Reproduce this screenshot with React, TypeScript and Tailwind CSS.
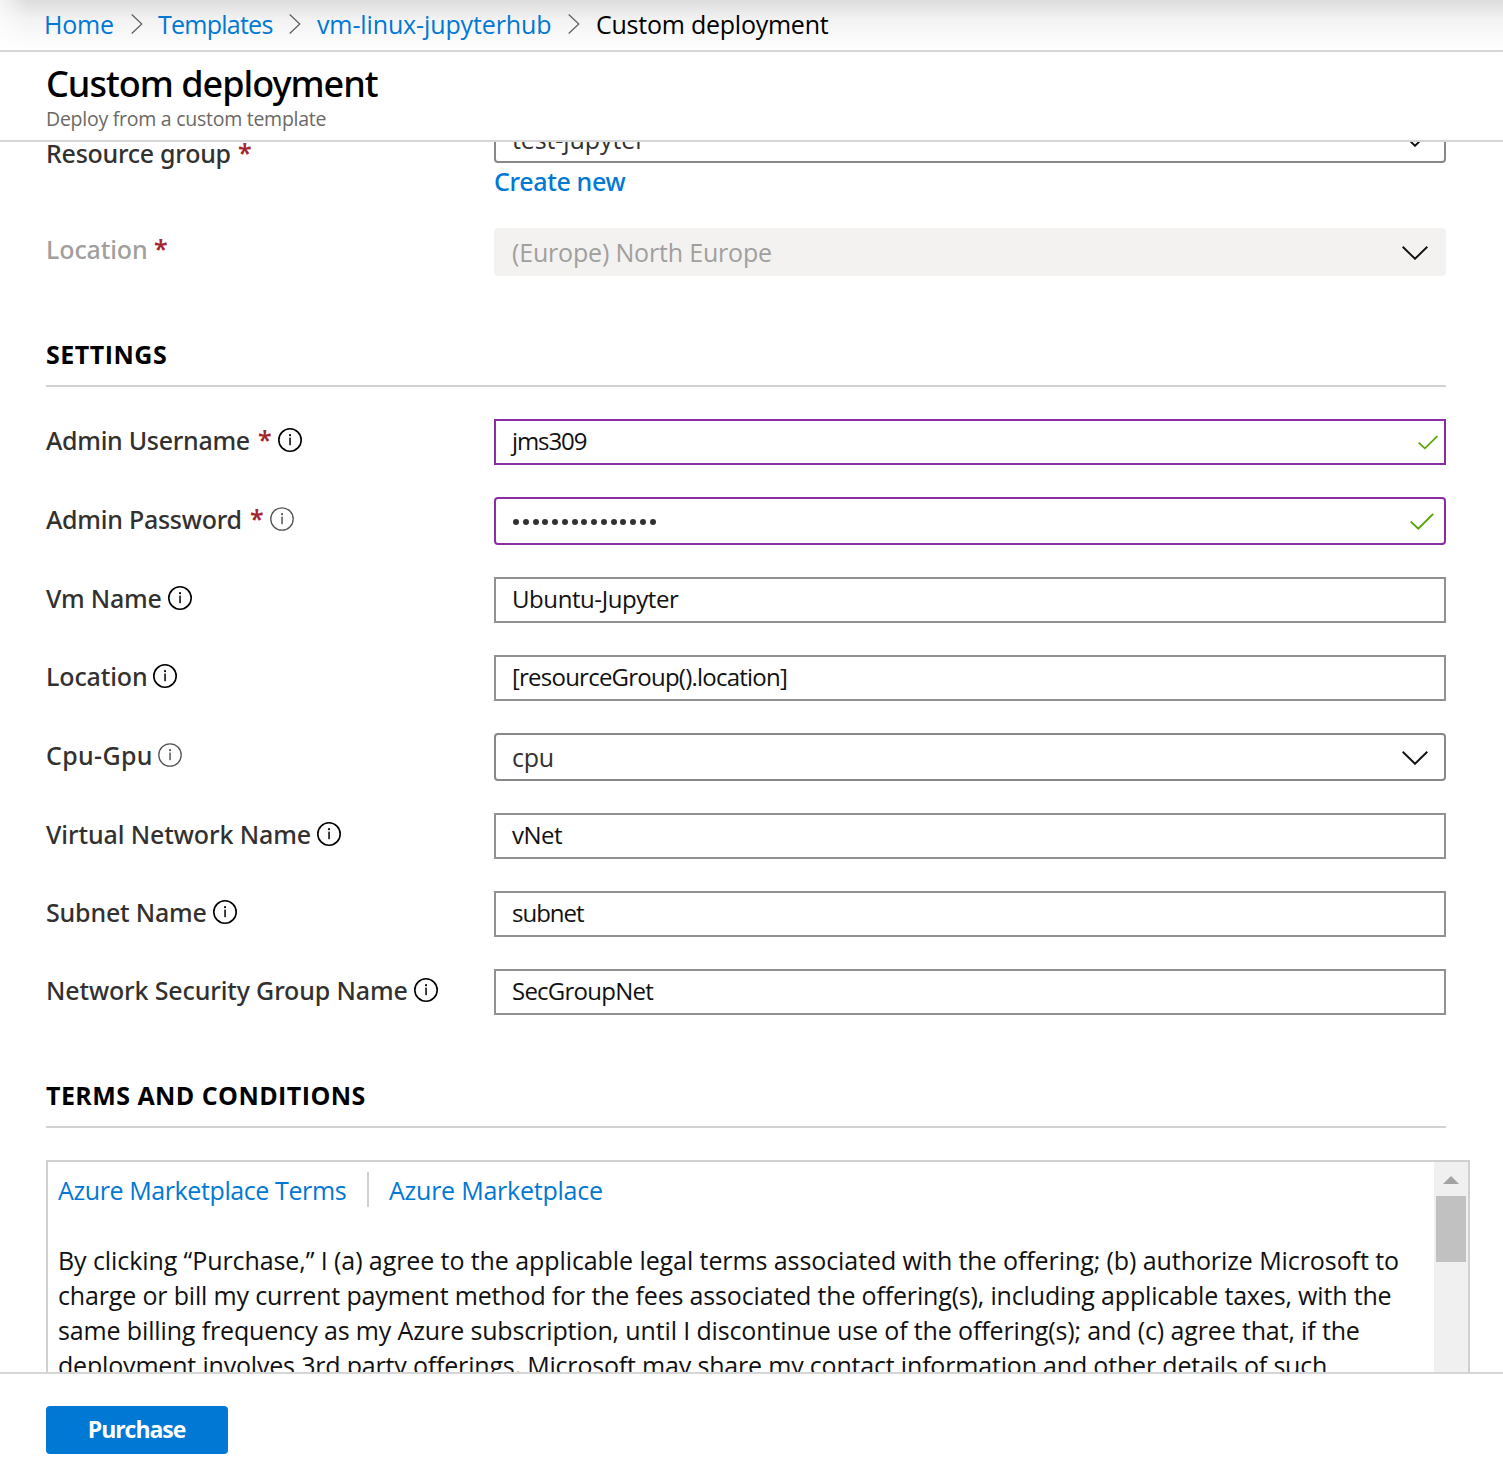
import React from "react";

const sans = "font-['Open_Sans','Noto_Sans',sans-serif]";
const medium = "font-['Noto_Sans','Open_Sans',sans-serif] font-medium";

function Separator() {
  return (
    <svg viewBox="0 0 12 20" className="mt-px mr-4 h-5 w-3 shrink-0" fill="none" stroke="#605e5c" strokeWidth="1.2">
      <path d="M0.7 0.5 L10.8 10 L0.7 19.5" />
    </svg>
  );
}

function Info({ muted }: { muted?: boolean }) {
  const color = muted ? "#555555" : "#000000";
  return (
    <svg viewBox="0 0 24 24" className="mt-px h-6 w-6 shrink-0" fill="none">
      <circle cx="12" cy="12" r="11.2" stroke={color} strokeWidth={muted ? 1.3 : 1.6} />
      <rect x="11.3" y="9.6" width="1.5" height="7.6" fill={color} />
      <rect x="11.1" y="6.2" width="1.9" height="1.9" fill={color} />
    </svg>
  );
}

function Chevron() {
  return (
    <svg viewBox="0 0 26 14" className="mt-px mr-4 h-[14px] w-[26px] shrink-0" fill="none" stroke="#111" strokeWidth="1.9">
      <path d="M0.7 0.8 L13 12.8 L25.3 0.8" />
    </svg>
  );
}

function Check({ className }: { className: string }) {
  return (
    <svg viewBox="0 0 24 17" className={`shrink-0 ${className}`} fill="none" stroke="#57a300" strokeWidth="1.9">
      <path d="M0.8 8.6 L8.3 15.6 L23.2 0.8" />
    </svg>
  );
}

function Star() {
  return <span className="h-[34px] w-5 shrink-0 text-[25px] leading-[32px] font-semibold text-[#a4262c]">*</span>;
}

type LabelProps = { text: string; className: string; required?: boolean; info?: "dark" | "muted"; disabled?: boolean };

function Label({ text, className, required, info, disabled }: LabelProps) {
  return (
    <div
      className={`flex w-[448px] shrink-0 items-center pb-[5px] text-[25px] leading-[34px] ${
        disabled ? "text-[#a19f9d]" : "text-[#323130]"
      } ${medium}`}
    >
      <span className={`shrink-0 whitespace-nowrap ${className}`}>{text}</span>
      {required && <Star />}
      {info && <Info muted={info === "muted"} />}
    </div>
  );
}

function TextBox({ text, className }: { text: string; className: string }) {
  return (
    <div className="flex h-[46px] flex-1 items-center border-2 border-[#919191] pb-[2px] pl-4 text-[24px] text-[#111]">
      <span className={`whitespace-nowrap ${className}`}>{text}</span>
    </div>
  );
}

function Select({ text, className }: { text: string; className: string }) {
  return (
    <div className="flex h-12 flex-1 items-center justify-between rounded-[4px] border-2 border-[#8a8886] pl-4 text-[25px] text-[#323130]">
      <span className={`pt-[2px] ${className}`}>{text}</span>
      <Chevron />
    </div>
  );
}

function Row({ children }: { children: React.ReactNode }) {
  return <div className="flex items-center">{children}</div>;
}

function SectionTitle({ children, className }: { children: React.ReactNode; className: string }) {
  return (
    <h2 className={`h-[55px] border-b-2 border-[#d2d2d2] pt-[5px] text-[25px] leading-[34px] font-bold text-black ${className}`}>
      {children}
    </h2>
  );
}

export default function App() {
  return (
    <div className={`flex h-[1477px] w-[1503px] flex-col overflow-hidden bg-white ${sans}`}>
      <nav className="relative flex h-[52px] shrink-0 items-center border-b-2 border-[#d6d6d6] bg-linear-to-b from-[#dddddd] via-[#f3f3f3] via-40% to-white pb-[3px] pl-[44px] text-[25px] leading-[34px] text-[#0078d4]">
        <div className="absolute inset-y-0 left-0 w-[28px] bg-linear-to-r from-white/70 to-transparent" />
        <a className="w-[87px] tracking-[-0.2px]">Home</a>
        <Separator />
        <a className="-ml-px w-[131px] tracking-[-0.75px]">Templates</a>
        <Separator />
        <a className="w-[251px] tracking-[-0.12px]">vm-linux-jupyterhub</a>
        <Separator />
        <span className="tracking-[-0.24px] text-black">Custom deployment</span>
      </nav>

      <header className="h-[90px] shrink-0 border-b-2 border-[#d6d6d6] pl-[46px]">
        <h1 className={`mt-[8px] h-[48px] text-[36px] leading-[48px] tracking-[-1px] text-black ${medium}`}>Custom deployment</h1>
        <p className="h-[26px] text-[19.5px] leading-[22px] tracking-[-0.26px] text-[#6b6966]">Deploy from a custom template</p>
      </header>

      <main className="h-[1230px] shrink-0 overflow-hidden pr-[33px] pl-[46px]">
        <div className="-mt-[27px] w-[1400px]">
          <div className="flex h-[113px] items-start">
            <div className="pt-[21px]">
              <Label text="Resource group" className="w-[192px] tracking-[-0.26px]" required />
            </div>
            <div className="flex-1">
              <Select text="test-jupyter" className="tracking-[-0.1px]" />
              <a className={`block pt-px text-[25px] leading-[34px] tracking-[-0.35px] text-[#0078d4] ${medium}`}>Create new</a>
            </div>
          </div>

          <Row>
            <div className="pb-[2px]">
              <Label text="Location" className="w-[108px] tracking-[-0.12px]" required disabled />
            </div>
            <div className="flex h-12 flex-1 items-center justify-between rounded-[4px] bg-[#f3f2f1] pr-[2px] pl-[18px] text-[25px] text-[#a19f9d]">
              <span className="pt-[2px] tracking-[-0.18px]">(Europe) North Europe</span>
              <Chevron />
            </div>
          </Row>

          <div className="pt-[56px]">
            <SectionTitle className="tracking-[0.5px]">SETTINGS</SectionTitle>
          </div>

          <div className="flex flex-col gap-8 pt-8">
            <Row>
              <Label text="Admin Username" className="w-[212px] tracking-[-0.3px]" required info="dark" />
              <div className="flex h-[46px] flex-1 items-center justify-between border-2 border-[#8a2da5] pb-[2px] pl-4 text-[24px] text-[#111]">
                <span className="tracking-[-1.1px]">jms309</span>
                <Check className="mt-[2px] mr-[6px] h-[15px] w-[20px]" />
              </div>
            </Row>
            <Row>
              <Label text="Admin Password" className="w-[204px] tracking-[-0.26px]" required info="muted" />
              <div className="flex h-12 flex-1 items-center justify-between rounded-[4px] border-2 border-[#8a2da5] pl-[17px]">
                <div className="flex gap-[3.78px] pt-[2px]">
                  {Array.from({ length: 15 }, (_, i) => (
                    <span key={i} className="h-[6px] w-[6px] rounded-full bg-[#323130]" />
                  ))}
                </div>
                <Check className="mr-[10px] h-[17px] w-[24px]" />
              </div>
            </Row>
            <Row>
              <Label text="Vm Name" className="w-[122px] tracking-[-0.2px]" info="dark" />
              <TextBox text="Ubuntu-Jupyter" className="tracking-[-0.42px]" />
            </Row>
            <Row>
              <Label text="Location" className="w-[107px] tracking-[-0.12px]" info="dark" />
              <TextBox text="[resourceGroup().location]" className="tracking-[-0.77px]" />
            </Row>
            <Row>
              <Label text="Cpu-Gpu" className="w-[112px] tracking-[0.35px]" info="muted" />
              <Select text="cpu" className="tracking-[-0.3px]" />
            </Row>
            <Row>
              <Label text="Virtual Network Name" className="w-[271px] tracking-[-0.1px]" info="dark" />
              <TextBox text="vNet" className="tracking-[-0.5px]" />
            </Row>
            <Row>
              <Label text="Subnet Name" className="w-[167px] tracking-[-0.18px]" info="dark" />
              <TextBox text="subnet" className="tracking-[-1px]" />
            </Row>
            <Row>
              <Label text="Network Security Group Name" className="w-[368px] tracking-[-0.14px]" info="dark" />
              <TextBox text="SecGroupNet" className="tracking-[-0.76px]" />
            </Row>
          </div>

          <div className="pt-[58px]">
            <SectionTitle className="tracking-[0.43px]">TERMS AND CONDITIONS</SectionTitle>
          </div>
        </div>

        <section className="mt-8 flex h-[400px] w-[1424px] border-2 border-[#d0d0d0]">
          <div className="flex-1 pl-[10px] text-[25px] text-[#111]">
            <div className="mt-[10px] flex h-[35px] items-stretch leading-[37px] text-[#0078d4]">
              <a className="w-[311px] border-r-2 border-[#d0d0d0] whitespace-nowrap tracking-[-0.4px]">Azure Marketplace Terms</a>
              <a className="pl-5 tracking-[-0.24px]">Azure Marketplace</a>
            </div>
            <div className="pt-[36px] leading-[35px] whitespace-nowrap">
              <p className="tracking-[-0.083px]">
                By clicking “Purchase,” I (a) agree to the applicable legal terms associated with the offering; (b) authorize Microsoft to
              </p>
              <p className="tracking-[-0.163px]">
                charge or bill my current payment method for the fees associated the offering(s), including applicable taxes, with the
              </p>
              <p className="tracking-[-0.136px]">
                same billing frequency as my Azure subscription, until I discontinue use of the offering(s); and (c) agree that, if the
              </p>
              <p className="tracking-[-0.184px]">
                deployment involves 3rd party offerings, Microsoft may share my contact information and other details of such
              </p>
            </div>
          </div>
          <div className="flex w-[34px] shrink-0 flex-col items-center bg-[#f0f0f0]">
            <svg viewBox="0 0 16 8" className="mt-[14px] h-2 w-4" fill="#a3a3a3">
              <path d="M8 0 L16 8 H0 Z" />
            </svg>
            <div className="mt-[12px] h-[66px] w-[30px] bg-[#c1c1c1]" />
          </div>
        </section>
      </main>

      <footer className="flex-1 border-t-2 border-[#d6d6d6] pt-[32px] pl-[46px]">
        <button className="block h-12 w-[182px] rounded-[4px] bg-[#0078d4] pr-[1px] pb-[1px] text-[23px] font-bold tracking-[-1.05px] text-white">
          Purchase
        </button>
      </footer>
    </div>
  );
}
